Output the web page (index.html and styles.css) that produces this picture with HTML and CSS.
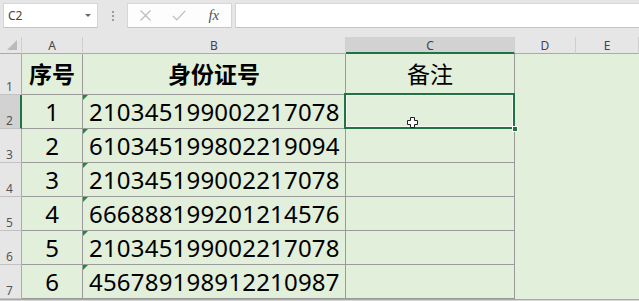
FILE: index.html
```html
<!DOCTYPE html>
<html lang="zh-CN">
<head>
  <meta charset="UTF-8" />
  <meta name="viewport" content="width=device-width, initial-scale=1.0"/>
  <title>身份证号 | Excel</title>
  <link rel="stylesheet" href="styles.css">
</head>
<body>
  <div class="formula-bar">
    <div class="name-box">
      <span>C2</span>
      <span class="name-arrow"></span>
    </div>
    <div class="grip"><span></span><span></span><span></span></div>
    <div class="fx-buttons">
      <svg class="btn-icon" width="11" height="11" viewBox="0 0 11 11"><path d="M0.5 0.5 L10.5 10.5 M10.5 0.5 L0.5 10.5" /></svg>
      <svg class="btn-icon" width="14" height="11" viewBox="0 0 14 11"><path d="M0.8 5.8 L4.8 9.8 L13.2 0.8" /></svg>
      <span class="fx">fx</span>
    </div>
    <div class="formula-input"></div>
  </div>

  <div class="sheet">
    <div class="corner"><span class="corner-mark"></span></div>
    <div class="col-head">A</div>
    <div class="col-head">B</div>
    <div class="col-head selected">C</div>
    <div class="col-head">D</div>
    <div class="col-head">E</div>

    <div class="row-head">1</div>
    <div class="cell title">序号</div>
    <div class="cell title">身份证号</div>
    <div class="cell note">备注</div>
    <div class="blank"></div>
    <div class="blank"></div>

    <div class="row-head selected">2</div>
    <div class="cell num">1</div>
    <div class="cell id">210345199002217078</div>
    <div class="cell active">
      <span class="fill-handle"></span>
      <svg class="cursor" width="11" height="11" viewBox="0 0 11 11">
        <path d="M3.5 0.5 H7.5 V3.5 H10.5 V7.5 H7.5 V10.5 H3.5 V7.5 H0.5 V3.5 H3.5 Z" />
      </svg>
    </div>
    <div class="blank"></div>
    <div class="blank"></div>

    <div class="row-head">3</div>
    <div class="cell num">2</div>
    <div class="cell id">610345199802219094</div>
    <div class="cell"></div>
    <div class="blank"></div>
    <div class="blank"></div>

    <div class="row-head">4</div>
    <div class="cell num">3</div>
    <div class="cell id">210345199002217078</div>
    <div class="cell"></div>
    <div class="blank"></div>
    <div class="blank"></div>

    <div class="row-head">5</div>
    <div class="cell num">4</div>
    <div class="cell id">666888199201214576</div>
    <div class="cell"></div>
    <div class="blank"></div>
    <div class="blank"></div>

    <div class="row-head">6</div>
    <div class="cell num">5</div>
    <div class="cell id">210345199002217078</div>
    <div class="cell"></div>
    <div class="blank"></div>
    <div class="blank"></div>

    <div class="row-head">7</div>
    <div class="cell num">6</div>
    <div class="cell id">456789198912210987</div>
    <div class="cell"></div>
    <div class="blank"></div>
    <div class="blank"></div>

    <div class="sheet-bottom"></div>
  </div>
</body>
</html>
```

FILE: styles.css
```css
:root {
  --chrome-bg: #e6e6e6;
  --chrome-selected: #d2d2d2;
  --chrome-line: #ababab;
  --chrome-text: #444;
  --cell-bg: #e2efda;
  --grid-line: #9a9a9a;
  --excel-green: #217346;
}

* {
  box-sizing: border-box;
  margin: 0;
  padding: 0;
}

body {
  width: 639px;
  height: 301px;
  overflow: hidden;
  background: var(--chrome-bg);
  font-family: "Noto Sans", "Noto Sans CJK SC", sans-serif;
}

/* Formula bar */
.formula-bar {
  display: flex;
  align-items: flex-start;
  height: 37px;
  padding: 3px 0 0 3px;
}

.name-box {
  display: flex;
  align-items: center;
  justify-content: space-between;
  width: 95px;
  height: 25px;
  padding: 0 6px 0 4px;
  background: #fff;
  border: 1px solid #d6d6d6;
  border-bottom-color: #c4c4c4;
  font-size: 12px;
  color: var(--chrome-text);
}

.name-arrow {
  width: 0;
  height: 0;
  border-left: 3px solid transparent;
  border-right: 3px solid transparent;
  border-top: 3px solid #666;
}

.grip {
  display: flex;
  flex-direction: column;
  align-items: center;
  justify-content: center;
  gap: 2px;
  width: 29px;
  height: 25px;
}

.grip span {
  width: 2px;
  height: 2px;
  background: #9c9c9c;
}

.fx-buttons {
  display: grid;
  grid-template-columns: repeat(3, 1fr);
  align-items: center;
  justify-items: center;
  width: 105px;
  height: 25px;
  background: #fdfdfd;
  border: 1px solid #d6d6d6;
  border-bottom-color: #c4c4c4;
}

.btn-icon path {
  fill: none;
  stroke: #bcbcbc;
  stroke-width: 1.2;
}

.fx {
  font-family: "Liberation Serif", serif;
  font-style: italic;
  font-size: 15px;
  color: #555;
  line-height: 1;
}

.formula-input {
  flex: 1;
  height: 25px;
  margin-left: 3px;
  background: #fff;
  border: 1px solid #d6d6d6;
  border-right: none;
  border-bottom-color: #c4c4c4;
}

/* Sheet grid */
.sheet {
  display: grid;
  grid-template-columns: 22px 61px 263px 169px 61px 1fr;
  grid-template-rows: 17px 41px repeat(6, 34px) 1fr;
  height: 264px;
}

.corner {
  display: flex;
  align-items: flex-end;
  justify-content: flex-end;
  padding: 0 4px 3px 0;
  border-right: 1px solid #cfcfcf;
  border-bottom: 1px solid var(--chrome-line);
}

.corner-mark {
  width: 0;
  height: 0;
  border-left: 10px solid transparent;
  border-bottom: 10px solid #bababa;
}

.col-head {
  display: flex;
  align-items: center;
  justify-content: center;
  border-right: 1px solid #cfcfcf;
  border-bottom: 1px solid var(--chrome-line);
  font-size: 12px;
  color: var(--chrome-text);
}

.col-head.selected {
  background: var(--chrome-selected);
  border-bottom: 2px solid var(--excel-green);
  padding-top: 1px;
}

.row-head {
  display: flex;
  align-items: flex-end;
  padding: 0 0 1px 6px;
  border-right: 1px solid var(--chrome-line);
  border-bottom: 1px solid #c2c2c2;
  font-size: 12px;
  line-height: 13px;
  color: #555;
}

.row-head.selected {
  background: var(--chrome-selected);
  border-right: 2px solid var(--excel-green);
}

.cell {
  display: flex;
  align-items: center;
  padding-top: 1px;
  background: var(--cell-bg);
  border-right: 1px solid var(--grid-line);
  border-bottom: 1px solid var(--grid-line);
  font-size: 24px;
  line-height: 1;
  color: #000;
}

.title {
  justify-content: center;
  font-size: 23px;
  font-weight: bold;
}

.note {
  justify-content: center;
  font-size: 23px;
}

.num {
  justify-content: center;
}

.id {
  position: relative;
  padding-left: 6px;
  letter-spacing: 0.2px;
}

/* green "number stored as text" marker */
.id::before {
  content: '';
  position: absolute;
  top: 0;
  left: 0;
  border-top: 5px solid #1f8c3b;
  border-right: 5px solid transparent;
}

.blank {
  background: var(--cell-bg);
}

/* Active cell C2 */
.active {
  position: relative;
}

.active::after {
  content: '';
  position: absolute;
  top: -2px;
  left: -2px;
  right: -1px;
  bottom: -1px;
  border: 2px solid var(--excel-green);
  box-shadow: inset 0 0 0 1px #f4f8f1;
}

.fill-handle {
  position: absolute;
  right: -4px;
  bottom: -4px;
  width: 6px;
  height: 6px;
  background: var(--excel-green);
  border: 1px solid #fff;
  z-index: 2;
}

.cursor {
  position: absolute;
  left: 61px;
  top: 22px;
  z-index: 3;
}

.cursor path {
  fill: #fff;
  stroke: #222;
  stroke-width: 1;
}

.sheet-bottom {
  grid-column: 1 / -1;
  background: #d6d6d6;
  border-top: 1px solid #a8a8a8;
}
```
